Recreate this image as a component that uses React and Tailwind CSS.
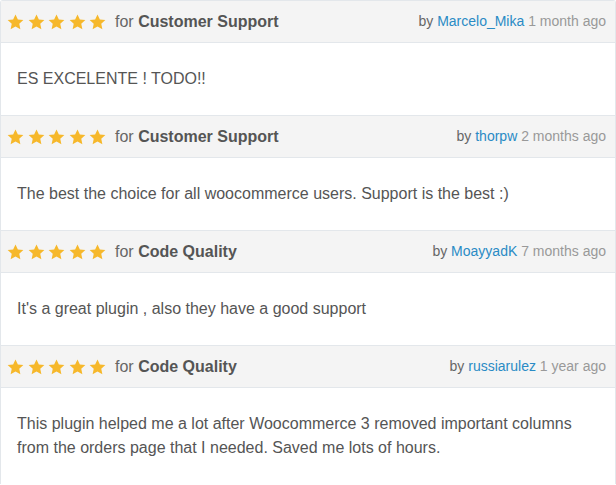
import React from "react";

const Star = () => (
  <svg width="17" height="16" viewBox="0 0 24 23" className="shrink-0">
    <path
      d="M12 0.6l3.4 7.2 7.9 0.9-5.9 5.4 1.6 7.8L12 18l-7 3.9 1.6-7.8L0.7 8.7l7.9-0.9z"
      fill="#f6b82b"
    />
  </svg>
);

const reviews = [
  {
    cat: "Customer Support",
    user: "Marcelo_Mika",
    time: "1 month ago",
    text: ["ES EXCELENTE ! TODO!!"],
  },
  {
    cat: "Customer Support",
    user: "thorpw",
    time: "2 months ago",
    text: ["The best the choice for all woocommerce users. Support is the best :)"],
  },
  {
    cat: "Code Quality",
    user: "MoayyadK",
    time: "7 months ago",
    text: ["It's a great plugin , also they have a good support"],
  },
  {
    cat: "Code Quality",
    user: "russiarulez",
    time: "1 year ago",
    text: [
      "This plugin helped me a lot after Woocommerce 3 removed important columns",
      "from the orders page that I needed. Saved me lots of hours.",
    ],
  },
];

export default function App() {
  return (
    <div
      className="w-[616px] h-[485px] overflow-hidden bg-white"
      style={{ fontFamily: '"Liberation Sans", Arial, sans-serif' }}
    >
      {reviews.map((r, i) => (
        <div
          key={i}
          className={`border-x border-t border-[#e3e7eb] ${i === 0 ? "rounded-t-[3px]" : ""}`}
        >
          <div className="h-[42px] bg-[#f4f4f4] border-b border-[#e3e7eb] flex items-center pl-[6px] pr-[9px]">
            <div className="flex items-center gap-[3.5px] pt-[1px]">
              <Star />
              <Star />
              <Star />
              <Star />
              <Star />
            </div>
            <div className="ml-[9px] text-[16px] text-[#666]">
              for <span className="font-bold text-[#555]">{r.cat}</span>
            </div>
            <div className="ml-auto text-[14px] text-[#666]">
              by <span className="text-[#2a8bc5]">{r.user}</span>{" "}
              <span className="text-[#999]">{r.time}</span>
            </div>
          </div>
          <div className="px-[16px] py-[24px] text-[16px] leading-[24px] text-[#555]">
            {r.text.map((t, j) => (
              <div key={j}>{t}</div>
            ))}
          </div>
        </div>
      ))}
    </div>
  );
}
